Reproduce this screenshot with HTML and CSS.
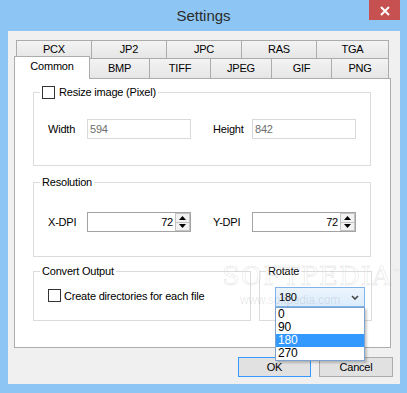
FILE: index.html
```html
<!DOCTYPE html>
<html lang="en">
  <head>
    <meta charset="UTF-8" />
    <meta name="viewport" content="width=device-width, initial-scale=1.0" />
    <title>Settings</title>
    <link rel="stylesheet" href="styles.css">
  </head>
  <body>
    <div class="window">
      <div class="titlebar">
        <span></span>
        <h1 class="title">Settings</h1>
        <a class="close" href="#">
          <svg width="31" height="20" viewBox="0 0 31 20">
            <path d="M12 7 L20 15 M20 7 L12 15" stroke="#fff" stroke-width="2" />
          </svg>
        </a>
      </div>
      <div class="client">
        <!-- two rows of tabs, the front one holds the selected tab -->
        <div class="tabrow back">
          <div class="tab w76">PCX</div>
          <div class="tab w76">JP2</div>
          <div class="tab w76">JPC</div>
          <div class="tab w76">RAS</div>
          <div class="tab w73">TGA</div>
        </div>
        <div class="tabrow front">
          <div class="tab w76 active">Common</div>
          <div class="tab w61">BMP</div>
          <div class="tab w62">TIFF</div>
          <div class="tab w62">JPEG</div>
          <div class="tab w61">GIF</div>
          <div class="tab w58">PNG</div>
        </div>
        <div class="panel">
          <fieldset class="group wide">
            <legend><span class="check"></span>Resize image (Pixel)</legend>
            <div class="fields resize">
              <div class="field">
                <label for="width">Width</label>
                <input class="text" id="width" value="594" disabled />
              </div>
              <div class="field">
                <label for="height">Height</label>
                <input class="text" id="height" value="842" disabled />
              </div>
            </div>
          </fieldset>
          <fieldset class="group wide resolution">
            <legend>Resolution</legend>
            <div class="fields dpi">
              <div class="field">
                <label>X-DPI</label>
                <div class="spin">
                  <span class="value">72</span>
                  <span class="arrows">
                    <span class="arrow"><svg width="7" height="4" viewBox="0 0 7 4"><path d="M0 4 L3.5 0 L7 4 Z" fill="#000" /></svg></span>
                    <span class="arrow"><svg width="7" height="4" viewBox="0 0 7 4"><path d="M0 0 L3.5 4 L7 0 Z" fill="#000" /></svg></span>
                  </span>
                </div>
              </div>
              <div class="field">
                <label>Y-DPI</label>
                <div class="spin">
                  <span class="value">72</span>
                  <span class="arrows">
                    <span class="arrow"><svg width="7" height="4" viewBox="0 0 7 4"><path d="M0 4 L3.5 0 L7 4 Z" fill="#000" /></svg></span>
                    <span class="arrow"><svg width="7" height="4" viewBox="0 0 7 4"><path d="M0 0 L3.5 4 L7 0 Z" fill="#000" /></svg></span>
                  </span>
                </div>
              </div>
            </div>
          </fieldset>
          <div class="groups-row">
            <fieldset class="group convert">
              <legend>Convert Output</legend>
              <div class="option"><span class="check"></span>Create directories for each file</div>
            </fieldset>
            <fieldset class="group rotate">
              <legend>Rotate</legend>
              <div class="combo-wrap">
                <div class="combo">
                  <span>180</span>
                  <svg width="8" height="5" viewBox="0 0 8 5"><path d="M1 1 L4 4 L7 1" stroke="#444" stroke-width="1.6" fill="none" /></svg>
                </div>
                <ul class="dropdown">
                  <li>0</li>
                  <li>90</li>
                  <li class="sel">180</li>
                  <li>270</li>
                </ul>
              </div>
            </fieldset>
          </div>
        </div>
        <div class="buttons">
          <button class="btn default">OK</button>
          <button class="btn cancel">Cancel</button>
        </div>
      </div>
      <div class="watermark">
        <div class="mark">SOFTPEDIA<sup>™</sup></div>
        <div class="url">www.softpedia.com</div>
      </div>
    </div>
  </body>
</html>
```

FILE: styles.css
```css
body {
  margin: 0;
  padding: 0;
  font-family: "Liberation Sans", Arial, sans-serif;
  font-size: 11px;
  letter-spacing: -0.2px;
  color: #000;
}
.window {
  position: relative;
  width: 407px;
  height: 393px;
  background: #8dc6f4;
  display: flex;
  flex-direction: column;
  overflow: hidden;
}
.titlebar {
  height: 31px;
  flex: none;
  display: grid;
  grid-template-columns: 38px 1fr 38px;
}
.title {
  margin: 0;
  font-size: 15px;
  font-weight: normal;
  letter-spacing: 0;
  line-height: 31px;
  text-align: center;
  color: #2b2b2b;
}
.close {
  display: block;
  width: 31px;
  height: 20px;
  background: #c75050;
}
.close svg {
  display: block;
}
.client {
  flex: 1;
  margin: 0 7px 9px 8px;
  padding: 9px 7px 0 6px;
  background: #f0f0f0;
}

/* tabs */
.tabrow {
  display: flex;
}
.tabrow.back {
  margin-left: 2px;
  height: 18px;
}
.tabrow.front {
  height: 20px;
  align-items: flex-start;
}
.tab {
  box-sizing: border-box;
  margin-right: -1px;
  border: 1px solid #acacac;
  border-bottom: none;
  background: linear-gradient(#f3f3f3, #e6e6e6);
  text-align: center;
}
.back .tab {
  height: 18px;
  line-height: 17px;
}
.front .tab {
  height: 20px;
  line-height: 18px;
}
.front .tab.active {
  position: relative;
  z-index: 1;
  height: 23px;
  margin-top: -2px;
  line-height: 18px;
  background: #fff;
}
.w76 { width: 76px; }
.w73 { width: 73px; }
.w62 { width: 62px; }
.w61 { width: 61px; }
.w58 { width: 58px; }

.panel {
  box-sizing: border-box;
  height: 270px;
  margin-right: 2px;
  padding: 6px 0 0 18px;
  border: 1px solid #adadad;
  background: #fff;
}

/* group boxes */
.group {
  box-sizing: border-box;
  margin: 0;
  padding: 0;
  min-width: 0;
  border: 1px solid #dcdcdc;
}
.group legend {
  margin-left: 6px;
  padding: 0 2px;
  line-height: 14px;
}
.group.wide {
  width: 338px;
}
.group.resolution {
  margin-top: 9px;
}
.groups-row {
  display: flex;
  gap: 8px;
  margin-top: 7px;
}
.group.convert {
  width: 218px;
}
.group.rotate {
  width: 113px;
}
.check {
  display: inline-block;
  box-sizing: border-box;
  width: 13px;
  height: 13px;
  margin-right: 4px;
  border: 1px solid #333;
  background: #fff;
  vertical-align: -3px;
}
.fields {
  display: flex;
  gap: 22px;
  padding-left: 14px;
}
.fields.resize {
  padding-top: 20px;
  padding-bottom: 26px;
}
.fields.dpi {
  padding-top: 23px;
  padding-bottom: 24px;
}
.field {
  display: flex;
  align-items: center;
}
.field label {
  width: 39px;
}
.text {
  box-sizing: border-box;
  width: 104px;
  height: 20px;
  margin: 0;
  padding: 0 2px;
  border: 1px solid #d9d9d9;
  background: #fff;
  color: #6d6d6d;
  font: inherit;
  letter-spacing: inherit;
}
.spin {
  box-sizing: border-box;
  display: flex;
  width: 104px;
  height: 20px;
  border: 1px solid #a3a3a3;
  background: #fff;
}
.spin .value {
  flex: 1;
  padding-right: 1px;
  line-height: 18px;
  text-align: right;
}
.arrows {
  display: flex;
  flex-direction: column;
  width: 15px;
  margin: 0 0 0 1px;
}
.arrow {
  flex: 1;
  display: flex;
  align-items: center;
  justify-content: center;
  border: 1px solid #c4c4c4;
  background: #f2f2f2;
}
.arrow + .arrow {
  border-top: none;
}
.arrow svg {
  display: block;
}
.option {
  display: flex;
  align-items: center;
  height: 13px;
  margin: 11px 0 18px 14px;
}
.option .check {
  margin-right: 3px;
}

/* combo box with its open list */
.combo-wrap {
  position: relative;
  width: 90px;
  margin: 9px 0 13px 15px;
}
.combo {
  box-sizing: border-box;
  display: flex;
  align-items: center;
  justify-content: space-between;
  height: 20px;
  padding: 0 5px 0 3px;
  border: 1px solid #7eb4ea;
  background: linear-gradient(#ecf4fc, #dcecfc);
}
.dropdown {
  position: absolute;
  top: 20px;
  left: 0;
  z-index: 5;
  box-sizing: border-box;
  width: 90px;
  margin: 0;
  padding: 0;
  list-style: none;
  border: 1px solid #7da2ce;
  background: #fff;
  box-shadow: 2px 2px 2px rgba(0, 0, 0, 0.2);
  font-size: 12px;
}
.dropdown li {
  height: 13px;
  line-height: 13px;
  padding-left: 2px;
}
.dropdown .sel {
  background: #3399ff;
  color: #fff;
}

.buttons {
  display: flex;
  justify-content: flex-end;
  gap: 8px;
  margin-top: 9px;
}
.btn {
  box-sizing: border-box;
  width: 73px;
  height: 20px;
  padding: 0;
  border: 1px solid #acacac;
  background: #e1e1e1;
  font: inherit;
  letter-spacing: inherit;
  color: #000;
}
.btn.default {
  border-color: #3399ff;
}
.btn.cancel {
  width: 74px;
}

/* faint site watermark over the dialog */
.watermark {
  position: absolute;
  left: 222px;
  top: 258px;
  z-index: 6;
  pointer-events: none;
}
.mark {
  font-family: "DejaVu Serif", serif;
  font-size: 26px;
  letter-spacing: 1px;
  line-height: 30px;
  color: rgba(255, 255, 255, 0.3);
  -webkit-text-stroke: 1px rgba(0, 0, 0, 0.09);
}
.mark sup {
  font-size: 8px;
  -webkit-text-stroke: 0;
  color: rgba(0, 0, 0, 0.12);
}
.url {
  margin: 2px 0 0 18px;
  font-size: 12px;
  color: rgba(0, 0, 0, 0.1);
}
```
